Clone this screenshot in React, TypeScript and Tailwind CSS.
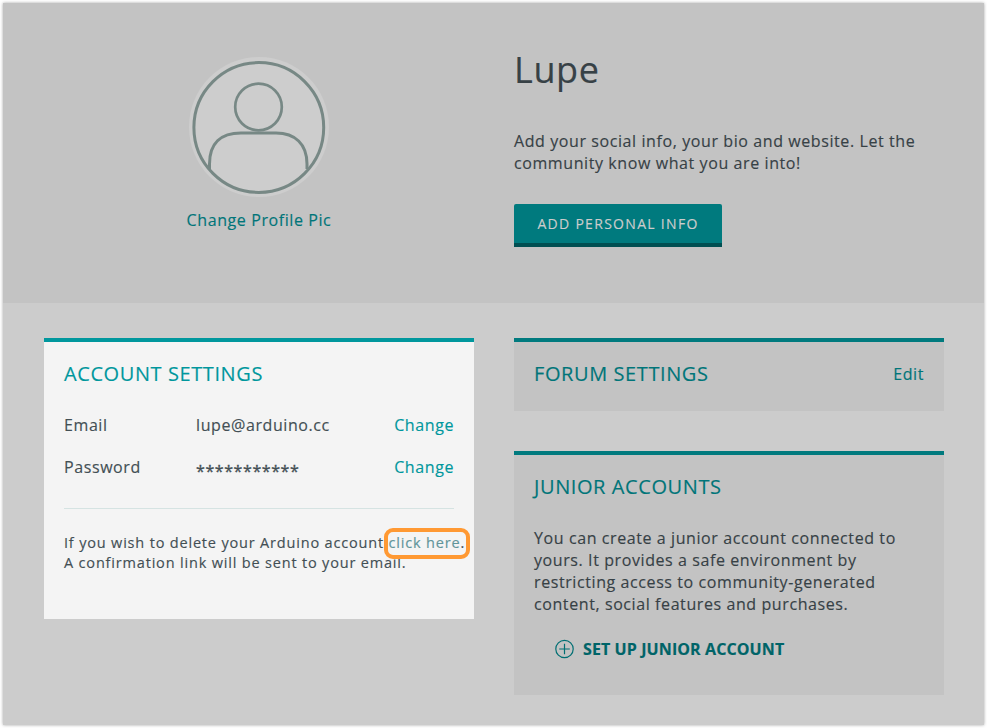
import React from "react";

function Avatar() {
  return (
    <svg width="140" height="140" viewBox="0 0 140 140" fill="none" className="block">
      <circle cx="70" cy="70" r="70" fill="#cdcdcd" />
      <g stroke="#778885" strokeWidth="3">
        <circle cx="69.8" cy="70.5" r="64.9" />
        <circle cx="69.5" cy="50" r="23.3" strokeWidth="2.7" />
        <path d="M20.5 112V107C20.5 86 32 76 52 76H87C106 76 118 87 118 107V112" />
      </g>
    </svg>
  );
}

function Row({ label, value, valueClass }: { label: string; value: string; valueClass: string }) {
  return (
    <div className="flex h-[42px] items-center">
      <span className="w-[132px]">{label}</span>
      <span className={valueClass}>{value}</span>
      <a className="ml-auto text-[#00979d]">Change</a>
    </div>
  );
}

export default function App() {
  return (
    <div className="h-[728px] w-[987px] bg-white p-[3px] font-['Open_Sans',sans-serif] text-[16px] leading-[22px] tracking-[0.59px] text-[#374146] [-webkit-text-stroke:0.15px]">
      <div className="h-[722px] w-[981px] bg-[#cccccc] shadow-[0_0_3px_rgba(0,0,0,0.35)]">
        <header className="flex h-[300px] gap-10 bg-[#c3c3c3] pl-[41px]">
          <div className="flex w-[430px] flex-col items-center pt-[54px]">
            <Avatar />
            <a className="mt-[12px] whitespace-nowrap text-[#007579]">Change Profile Pic</a>
          </div>
          <div className="w-[430px] pt-[42px]">
            <h1 className="h-[50px] text-[36px] leading-[50px]">Lupe</h1>
            <p className="mt-[35px] whitespace-nowrap">
              Add your social info, your bio and website. Let the
              <br />
              community know what you are into!
            </p>
            <button className="mt-[30px] block h-[43px] w-[208px] rounded-t-[2px] border-b-4 border-[#004f52] bg-[#007a7e] text-[14px] leading-[38px] tracking-[1.3px] text-[#cccccc]">
              ADD PERSONAL INFO
            </button>
          </div>
        </header>
        <main className="flex items-start gap-10 pt-[35px] pl-[41px]">
          <section className="h-[281px] w-[430px] border-t-4 border-[#00979d] bg-[#f4f4f4] px-5 text-[#434f54]">
            <h2 className="pt-[19px] pb-[17px] text-[20px] leading-[26px] text-[#00979d]">ACCOUNT SETTINGS</h2>
            <Row label="Email" value="lupe@arduino.cc" valueClass="" />
            <Row label="Password" value="***********" valueClass="pt-[8px] [-webkit-text-stroke:0.35px]" />
            <hr className="mt-[20px] border-[#d5e3e2]" />
            <p className="mt-[24px] whitespace-nowrap text-[14.5px] leading-[20px] tracking-[0.82px]">
              If you wish to delete your Arduino account{" "}
              <span className="relative">
                <a className="text-[#62959a]">click here</a>.
                <span className="absolute -top-[5px] -left-[5px] h-[31px] w-[86px] rounded-[9px] border-4 border-[#ff9933]" />
              </span>
              <br />A confirmation link will be sent to your email.
            </p>
          </section>
          <div className="flex w-[430px] flex-col gap-10">
            <section className="flex h-[73px] items-center justify-between border-t-4 border-[#007a7e] bg-[#c3c3c3] px-5 pb-[5px] text-[#007579]">
              <h2 className="text-[20px] leading-[26px]">FORUM SETTINGS</h2>
              <a>Edit</a>
            </section>
            <section className="h-[244px] border-t-4 border-[#007a7e] bg-[#c3c3c3] px-5">
              <h2 className="pt-[19px] text-[20px] leading-[26px] text-[#007579]">JUNIOR ACCOUNTS</h2>
              <p className="mt-[27px] whitespace-nowrap">
                You can create a junior account connected to
                <br />
                yours. It provides a safe environment by
                <br />
                restricting access to community-generated
                <br />
                content, social features and purchases.
              </p>
              <a className="mt-[23px] ml-[20px] flex items-center text-[16px] font-bold tracking-[0.1px] whitespace-nowrap text-[#006468]">
                <svg width="20" height="20" viewBox="0 0 20 20" fill="none" stroke="#006f73" strokeWidth="1.2" className="mr-[9px]">
                  <circle cx="10.5" cy="10" r="8.7" />
                  <path d="M10.5 4.7V15.3M5.2 10H15.8" />
                </svg>
                SET UP JUNIOR ACCOUNT
              </a>
            </section>
          </div>
        </main>
      </div>
    </div>
  );
}
